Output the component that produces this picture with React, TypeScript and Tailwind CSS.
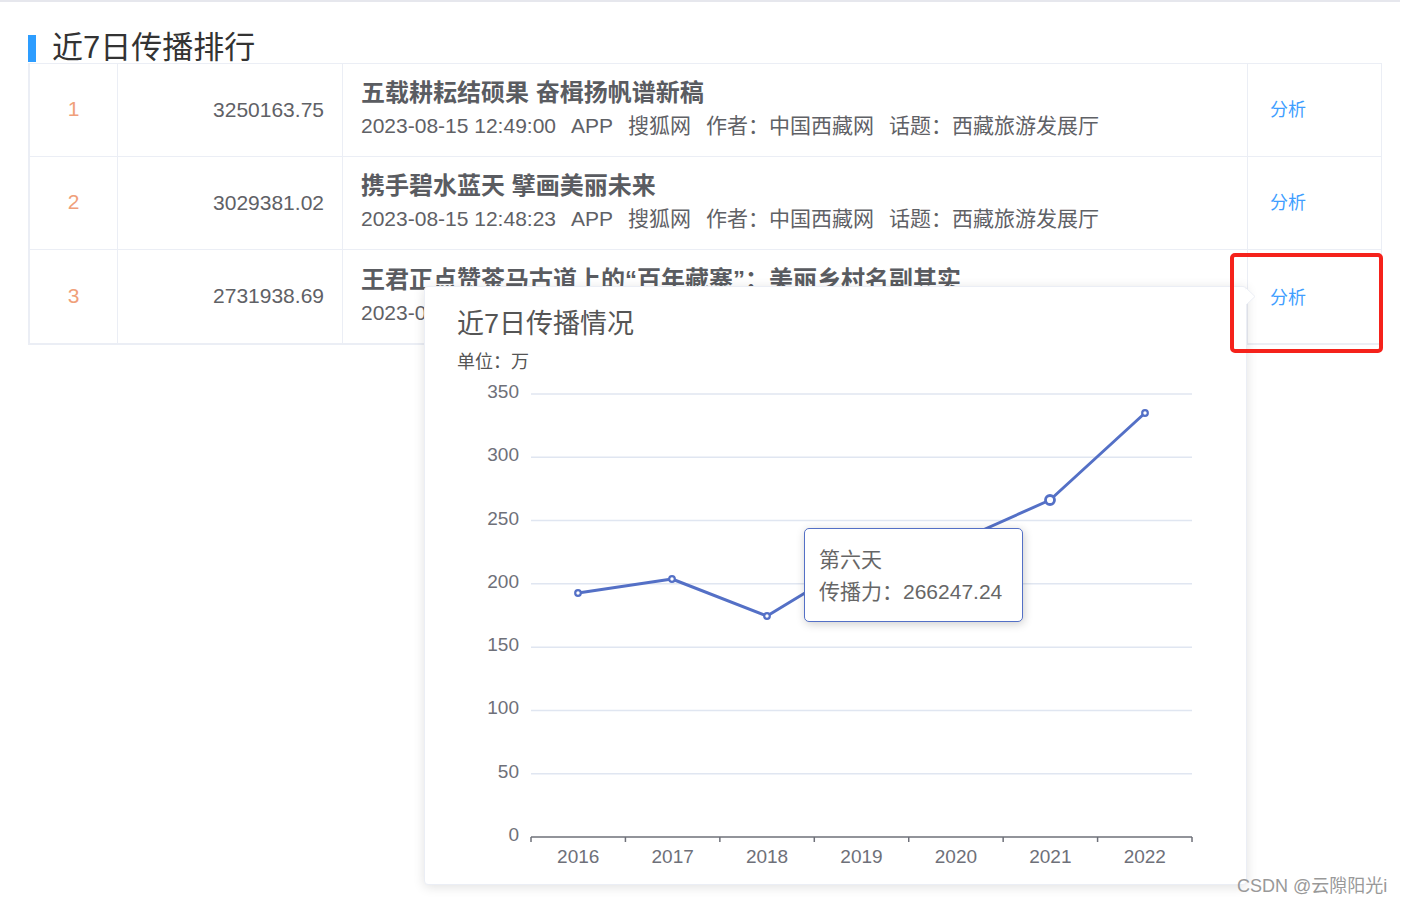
import React from 'react';

const rows = [
  { rank: 1, value: '3250163.75', title: '五载耕耘结硕果 奋楫扬帆谱新稿', time: '2023-08-15 12:49:00' },
  { rank: 2, value: '3029381.02', title: '携手碧水蓝天 擘画美丽未来', time: '2023-08-15 12:48:23' },
  { rank: 3, value: '2731938.69', title: '王君正点赞茶马古道上的“百年藏寨”：美丽乡村名副其实', time: '2023-08-15 12:47:35' },
];

const years = ['2016', '2017', '2018', '2019', '2020', '2021', '2022'];
const yLabels = [0, 50, 100, 150, 200, 250, 300, 350];
const X0 = 531;
const XW = 94.43;
const Y0 = 837;
const YS = 63.29;
const pts: [number, number][] = [
  [578, 593],
  [672, 579],
  [767, 616],
  [861, 559],
  [956, 542],
  [1050, 500],
  [1145, 413],
];

export default function App() {
  return (
    <div className="relative h-[904px] w-[1402px] overflow-hidden bg-white font-['Liberation_Sans','Noto_Sans_CJK_SC',sans-serif] text-[#606266]">
      <div className="h-[2px] w-[1400px] bg-[#e6e7ed]" />
      <div className="pl-[28px]">
        <div className="mt-[31px] flex h-[30px] items-center">
          <div className="h-[27px] w-[8px] bg-[#2d9dff]" />
          <div className="ml-[16px] text-[31px] leading-[30px] text-[#333]">近7日传播排行</div>
        </div>
        <div className="w-[1354px] border-t border-r border-b-2 border-l-2 border-[#ebeef5]">
          {rows.map((r, i) => (
            <div
              key={r.rank}
              className={`flex h-[93px] ${i < rows.length - 1 ? 'border-b border-[#ebeef5]' : ''}`}
            >
              <div className="flex w-[88px] items-center justify-center border-r border-[#ebeef5] pb-[2px] text-[21px] text-[#f0a07a]">
                {r.rank}
              </div>
              <div className="flex w-[225px] items-center justify-end border-r border-[#ebeef5] pr-[18px] pb-[1px] text-[21px] text-[#5f6166]">
                {r.value}
              </div>
              <div className="flex w-[905px] flex-col justify-center overflow-hidden border-r border-[#ebeef5] pl-[18px]">
                <div className="whitespace-nowrap text-[24px] font-bold leading-[32px] text-[#5a5c61]">{r.title}</div>
                <div className="flex gap-[15px] whitespace-nowrap text-[21px] leading-[34px] text-[#5f6166]">
                  <span>{r.time}</span>
                  <span>APP</span>
                  <span>搜狐网</span>
                  <span>作者：中国西藏网</span>
                  <span>话题：西藏旅游发展厅</span>
                </div>
              </div>
              <div
                className={`flex flex-1 items-center pl-[22px] text-[18px] text-[#409eff] ${i === 2 ? 'pt-[4px]' : 'pt-[1px]'}`}
              >
                分析
              </div>
            </div>
          ))}
        </div>
      </div>

      {/* Popover */}
      <div className="absolute left-[424px] top-[286px] h-[599px] w-[823px] rounded-[4px] border border-[#ebeef5] bg-white shadow-[0_2px_12px_0_rgba(0,0,0,0.12)]">
        <svg className="absolute right-[-10px] top-[1px]" width="10" height="18" viewBox="0 0 10 18">
          <polygon points="0,0 9,8.5 0,17" fill="#ffffff" />
          <polyline points="0,0 9,8.5 0,17" fill="none" stroke="#ebeef5" strokeWidth="1" />
        </svg>
        <div className="pl-[32px] pt-[19px]">
          <div className="text-[27px] leading-[36px] text-[#555]">近7日传播情况</div>
          <div className="mt-[8px] text-[18px] leading-[24px] text-[#555]">单位：万</div>
        </div>
        <svg className="absolute left-0 top-0" width="821" height="597" viewBox="425 287 821 597">
          {yLabels.map((v, i) => {
            const y = Y0 - i * YS;
            return (
              <g key={v}>
                {i > 0 && <line x1={X0} x2={1192} y1={y} y2={y} stroke="#e0e6f1" strokeWidth="1.5" />}
                <text x={519} y={y - 1} textAnchor="end" dominantBaseline="middle" fontSize="19" fill="#6e7079">
                  {v}
                </text>
              </g>
            );
          })}
          <line x1={X0} x2={1192} y1={Y0} y2={Y0} stroke="#6e7079" strokeWidth="1.5" />
          {Array.from({ length: 8 }).map((_, i) => {
            const x = X0 + i * XW;
            return <line key={i} x1={x} x2={x} y1={Y0} y2={Y0 + 5} stroke="#6e7079" strokeWidth="1.5" />;
          })}
          {years.map((yr, i) => (
            <text key={yr} x={X0 + XW / 2 + i * XW} y={858} textAnchor="middle" dominantBaseline="middle" fontSize="19" fill="#6e7079">
              {yr}
            </text>
          ))}
          <polyline
            points={pts.map((p) => p.join(',')).join(' ')}
            fill="none"
            stroke="#5470c6"
            strokeWidth="3"
            strokeLinejoin="round"
          />
          {pts.map((p, i) => (
            <circle
              key={i}
              cx={p[0]}
              cy={p[1]}
              r={i === 5 ? 4.5 : 2.8}
              fill="#ffffff"
              stroke="#5470c6"
              strokeWidth={i === 5 ? 2.8 : 2.2}
            />
          ))}
        </svg>
        <div className="absolute left-[379px] top-[241px] flex h-[94px] w-[219px] flex-col justify-center rounded-[5px] border border-[#5470c6] bg-white pl-[14px] pt-[2px] text-[21px] leading-[32px] text-[#666] shadow-[1px_2px_10px_rgba(0,0,0,0.2)]">
          <div>第六天</div>
          <div>传播力：266247.24</div>
        </div>
      </div>

      {/* highlight box */}
      <div className="absolute left-[1230px] top-[253px] h-[100px] w-[153px] rounded-[5px] border-[4px] border-[#f5221b]" />

      <div className="absolute left-[1237px] top-[875px] text-[18px] leading-[22px] text-[#999]">CSDN @云隙阳光i</div>
    </div>
  );
}
